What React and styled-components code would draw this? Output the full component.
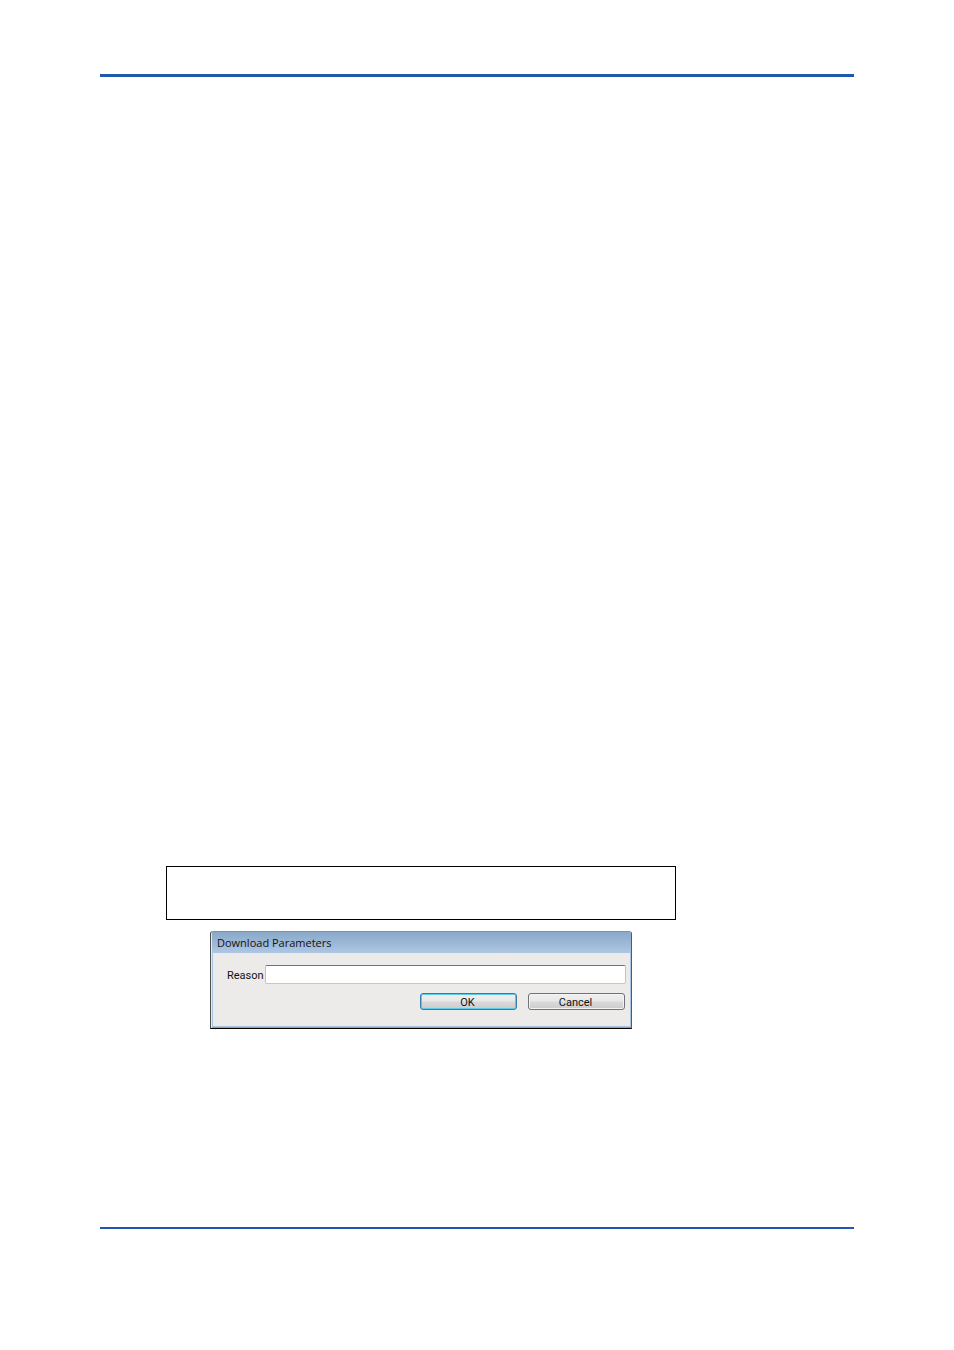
import React from "react";
import styled, { createGlobalStyle } from "styled-components";

const GlobalStyle = createGlobalStyle`
  * { box-sizing: border-box; }
  body { margin: 0; background: #fff; }
`;

const Page = styled.div`
  display: flex;
  flex-direction: column;
  min-height: 100vh;
  padding: 74px 100px 121px;
`;

const Rule = styled.hr`
  width: 100%;
  height: ${(p) => p.$weight}px;
  flex: none;
  margin: 0;
  border: 0;
  background: #1f58ae;
`;

const Content = styled.main`
  flex: 1;
  display: flex;
  flex-direction: column;
  gap: 11px;
  padding: 789px 178px 0 66px;
`;

const NoteBox = styled.div`
  height: 54px;
  border: 1px solid #000;
`;

const Dialog = styled.form`
  margin: 0 44px;
  padding-left: 1px;
  border: 1px solid;
  border-color: #8b8f92 #36647e #000 #4c4c4c;
  border-radius: 3px 3px 0 0;
  background: #e4eaf0;
  overflow: hidden;
`;

const TitleBar = styled.h1`
  height: 21px;
  margin: 0;
  padding: 0 5px;
  background: linear-gradient(#89a8c8, #adc6e3);
  color: #111;
  font: 400 11px/22px "Open Sans", "Noto Sans", sans-serif;
`;

const DialogBody = styled.div`
  padding: 12px 4px 16px 14px;
  border: 1px solid #a9c5df;
  border-top: 0;
  background: #ecebea;
`;

const BottomEdge = styled.div`
  height: 1px;
  background: #4cc0d4;
`;

const Field = styled.div`
  display: flex;
  align-items: center;
  gap: 1px;
`;

const Label = styled.label`
  width: 37px;
  padding-top: 2px;
  color: #111;
  font: 11px/17px Roboto, "Liberation Sans", sans-serif;
`;

const TextInput = styled.input`
  flex: 1;
  min-width: 0;
  height: 19px;
  padding: 0 3px;
  border: 1px solid;
  border-color: #477bae #a9cbe0 #a9cfe2 #a9cbe0;
  border-radius: 2px;
  outline: none;
  background: #fff;
  font: 11px Roboto, "Liberation Sans", sans-serif;
`;

const Actions = styled.div`
  display: flex;
  justify-content: flex-end;
  gap: 11px;
  padding: 9px 1px 0 0;
`;

const Button = styled.button`
  width: 97px;
  height: 17px;
  padding: 2px 2px 0 0;
  border: 1px solid ${(p) => (p.$primary ? "#377ca5" : "#707277")};
  border-radius: 3px;
  box-shadow: inset 0 0 0 1px ${(p) => (p.$primary ? "#5dcbe8" : "#f4f4f4")};
  background: linear-gradient(#f0f0f0 0%, #e8e8e8 45%, #d9d9d9 55%, #cbcccc 100%);
  color: #111;
  font: 11px/13px Roboto, "Liberation Sans", sans-serif;
`;

export default function App() {
  return (
    <>
      <GlobalStyle />
      <Page>
        <Rule $weight={3} />
        <Content>
          <NoteBox />
          <Dialog aria-labelledby="dialog-title" onSubmit={(e) => e.preventDefault()}>
            <TitleBar id="dialog-title">Download Parameters</TitleBar>
            <DialogBody>
              <Field>
                <Label htmlFor="reason">Reason</Label>
                <TextInput id="reason" type="text" />
              </Field>
              <Actions>
                <Button type="submit" $primary>OK</Button>
                <Button type="button">Cancel</Button>
              </Actions>
            </DialogBody>
            <BottomEdge />
          </Dialog>
        </Content>
        <Rule $weight={2} />
      </Page>
    </>
  );
}
